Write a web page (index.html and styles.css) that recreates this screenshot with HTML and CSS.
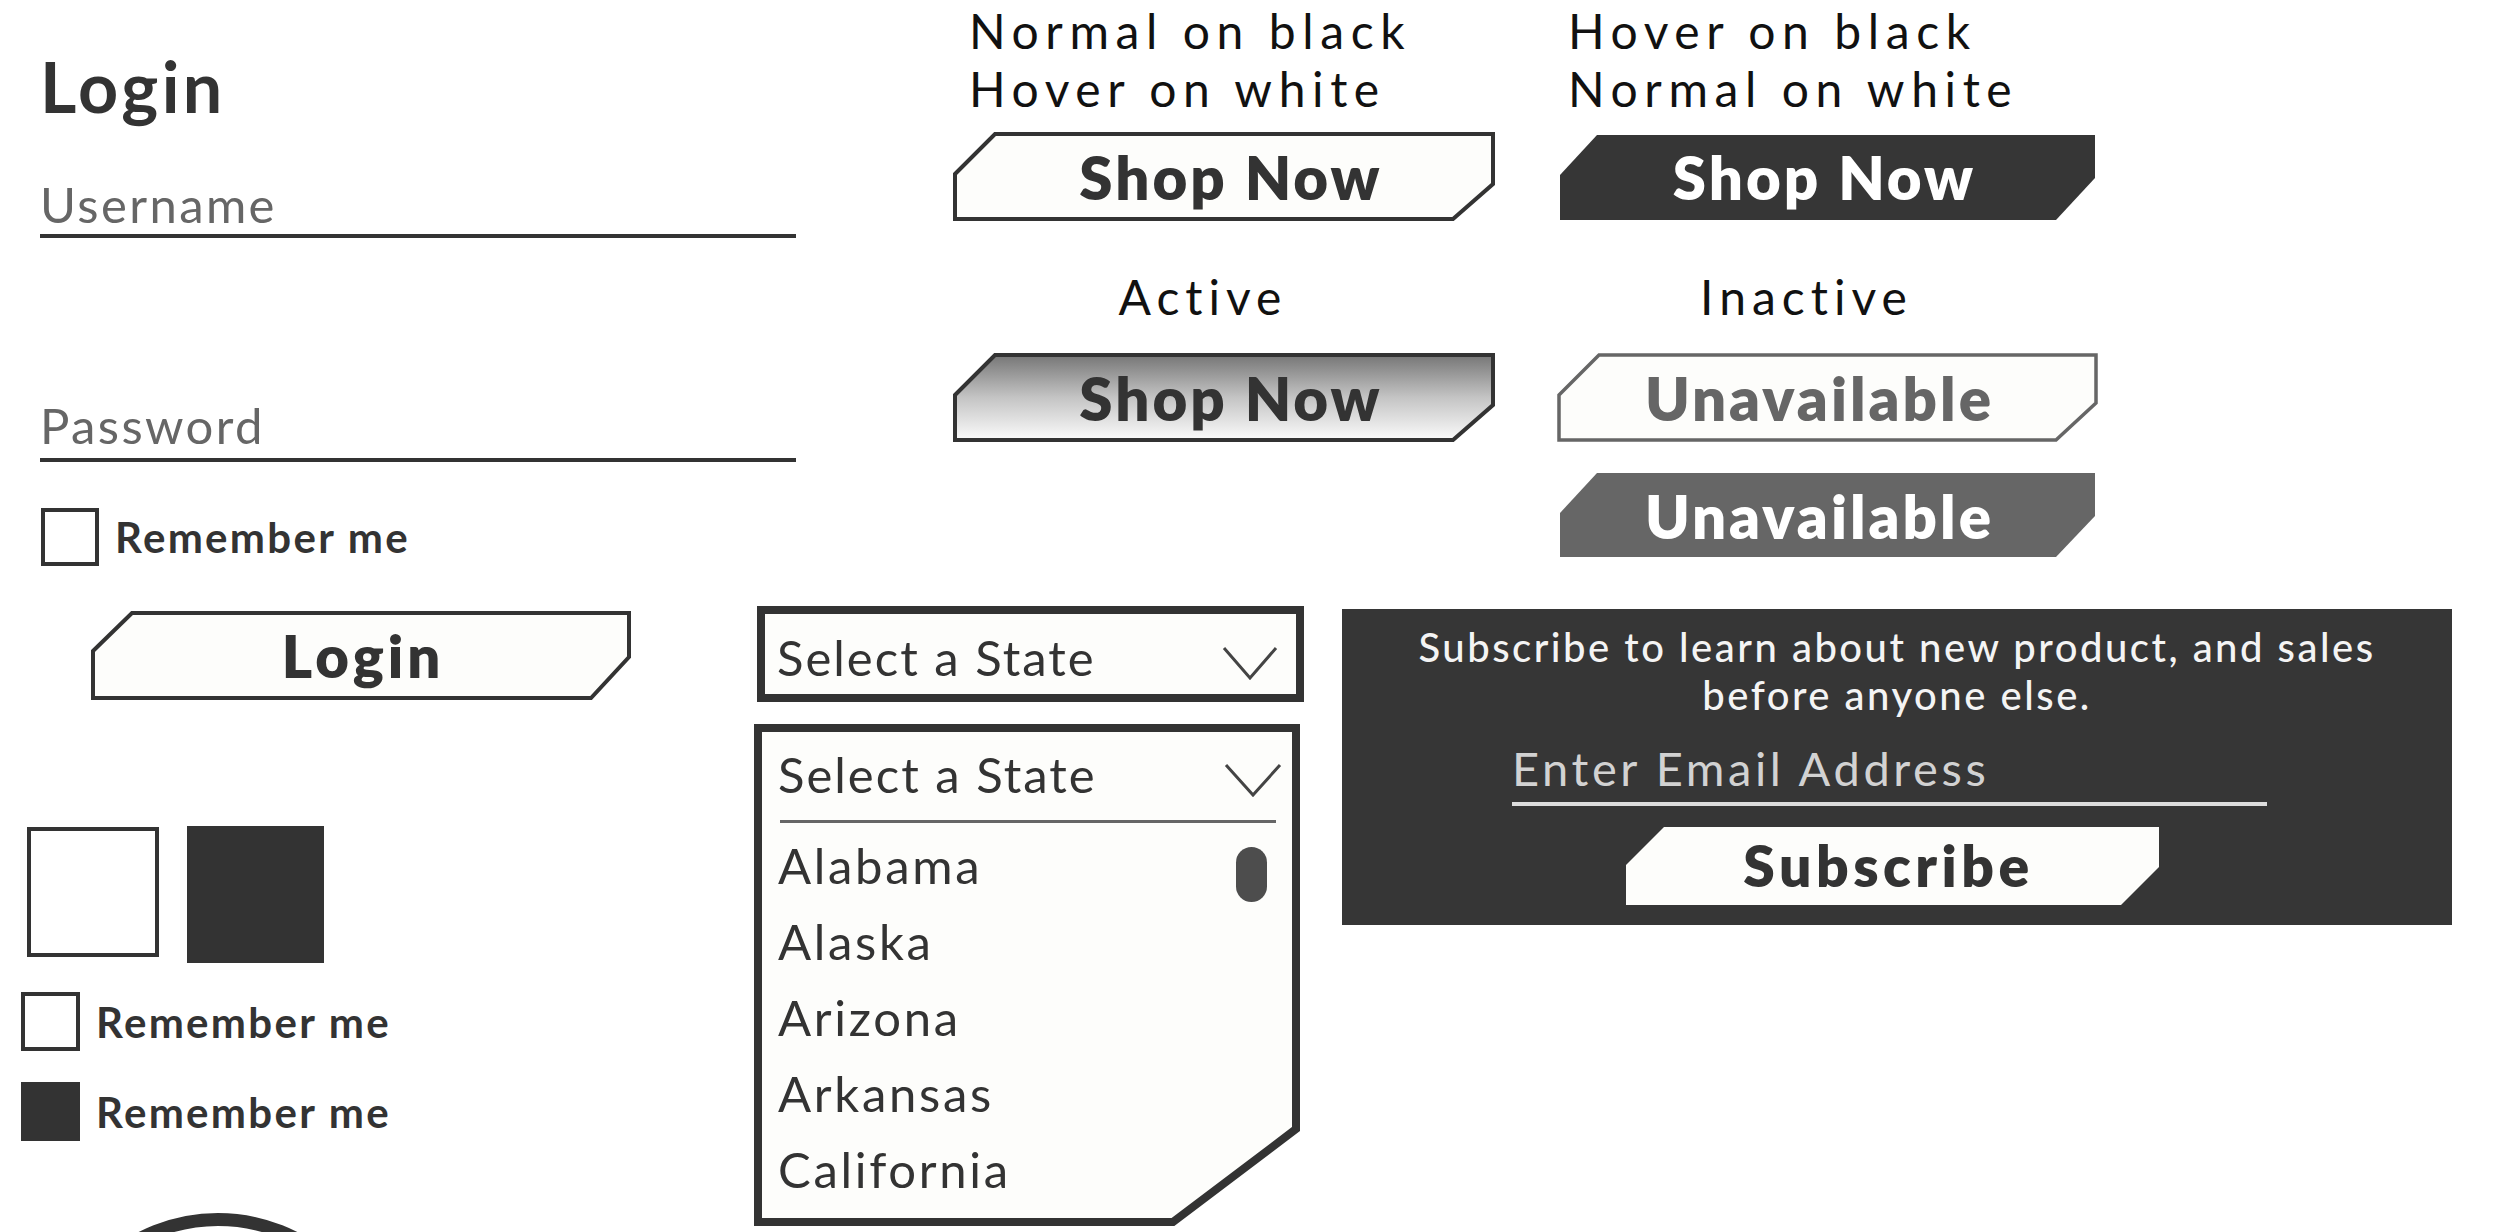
FILE: index.html
```html
<!DOCTYPE html>
<html lang="en">
<head>
<meta charset="utf-8">
<title>UI Kit – Forms and Buttons</title>
<link rel="stylesheet" href="styles.css">
</head>
<body>
<div class="page">
  <section class="login-col">
    <h1 class="title">Login</h1>
    <div class="field field-user"><span class="ph">Username</span></div>
    <div class="field field-pass"><span class="ph">Password</span></div>
    <div class="check check-main"><span class="box"></span><span class="check-label">Remember me</span></div>
    <div class="btn btn-login">
      <svg class="btn-shape" width="540" height="89" viewBox="0 0 540 89"><polygon class="shape-outline" points="2,40 41,2 538,2 538,46 500,87 2,87"/></svg>
      <span class="btn-text">Login</span>
    </div>
    <div class="swatches"><span class="swatch swatch-empty"></span><span class="swatch swatch-full"></span></div>
    <div class="check check-a"><span class="box"></span><span class="check-label">Remember me</span></div>
    <div class="check check-b check-on"><span class="box"></span><span class="check-label">Remember me</span></div>
    <div class="radio"></div>
  </section>

  <section class="main-col">
    <div class="states">
      <div class="state-col state-col-a">
        <p class="state-label label-a">Normal on black<br>Hover on white</p>
        <div class="btn btn-wide btn-row1">
          <svg class="btn-shape" width="542" height="89" viewBox="0 0 542 89"><polygon class="shape-outline" points="2,42 42,2 540,2 540,52 500,87 2,87"/></svg>
          <span class="btn-text text-shop">Shop Now</span>
        </div>
        <p class="state-label state-center">Active</p>
        <div class="btn btn-wide btn-row2">
          <svg class="btn-shape" width="542" height="89" viewBox="0 0 542 89">
            <defs>
              <linearGradient id="activeFill" x1="0" y1="0" x2="0" y2="1">
                <stop offset="0" stop-color="#767676"/>
                <stop offset="0.5" stop-color="#c4c4c4"/>
                <stop offset="1" stop-color="#fbfbfb"/>
              </linearGradient>
            </defs>
            <polygon class="shape-active" points="2,42 42,2 540,2 540,52 500,87 2,87"/>
          </svg>
          <span class="btn-text text-shop">Shop Now</span>
        </div>
      </div>

      <div class="state-col state-col-b">
        <p class="state-label label-b">Hover on black<br>Normal on white</p>
        <div class="btn btn-wide btn-row1">
          <svg class="btn-shape" width="541" height="89" viewBox="0 0 541 89"><polygon class="shape-dark" points="3,43 40,3 538,3 538,46 499,88 3,88"/></svg>
          <span class="btn-text btn-text-light text-shop-b">Shop Now</span>
        </div>
        <p class="state-label state-center">Inactive</p>
        <div class="btn btn-wide btn-row2">
          <svg class="btn-shape" width="541" height="89" viewBox="0 0 541 89"><polygon class="shape-muted" points="2,42 42,2 539,2 539,50 499,87 2,87"/></svg>
          <span class="btn-text btn-text-muted text-unavail">Unavailable</span>
        </div>
        <div class="btn btn-wide btn-row3">
          <svg class="btn-shape" width="541" height="89" viewBox="0 0 541 89"><polygon class="shape-grey" points="3,42 40,2 538,2 538,45 499,86 3,86"/></svg>
          <span class="btn-text btn-text-light text-unavail">Unavailable</span>
        </div>
      </div>
    </div>

    <div class="lower">
      <div class="selects">
        <div class="select">
          <span class="select-text">Select a State</span>
          <svg class="chevron" width="56" height="35" viewBox="0 0 56 35"><polyline points="2,2 28,32 54,2"/></svg>
        </div>
        <div class="dropdown">
          <svg class="dropdown-frame" width="546" height="502" viewBox="0 0 546 502"><polygon points="4,4 542,4 542,405 419,498 4,498"/></svg>
          <div class="dropdown-head">
            <span class="select-text">Select a State</span>
            <svg class="chevron chevron-open" width="58" height="35" viewBox="0 0 58 35"><polyline points="2,2 29,32 56,2"/></svg>
          </div>
          <div class="dropdown-rule"></div>
          <ul class="options">
            <li>Alabama</li>
            <li>Alaska</li>
            <li>Arizona</li>
            <li>Arkansas</li>
            <li>California</li>
          </ul>
          <span class="thumb"></span>
        </div>
      </div>

      <div class="subscribe">
        <p class="sub-text">Subscribe to learn about new product, and sales<br>before anyone else.</p>
        <div class="email"><span class="email-ph">Enter Email Address</span></div>
        <div class="btn btn-sub">
          <svg class="btn-shape" width="533" height="78" viewBox="0 0 533 78"><polygon class="shape-white" points="0,38 38,0 533,0 533,40 495,78 0,78"/></svg>
          <span class="btn-text">Subscribe</span>
        </div>
      </div>
    </div>
  </section>
</div>
</body>
</html>
```

FILE: styles.css
```css
* {
  box-sizing: border-box;
  margin: 0;
  padding: 0;
}

html,
body {
  background: #ffffff;
}

body {
  font-family: "Lato", "Open Sans", sans-serif;
  color: #333333;
}

.page {
  width: 2500px;
  height: 1232px;
  overflow: hidden;
  display: flex;
  align-items: flex-start;
}

/* ---------- Left column: login form ---------- */

.login-col {
  width: 757px;
  flex: none;
  display: flex;
  flex-direction: column;
  align-items: flex-start;
}

.title {
  margin: 51px 0 0 40px;
  font-size: 70px;
  line-height: 70px;
  font-weight: 700;
  letter-spacing: 3.4px;
  color: #333333;
}

.field {
  width: 756px;
  margin-left: 40px;
  border-bottom: 4px solid #333333;
}

.field-user {
  margin-top: 59px;
  padding-bottom: 5px;
}

.field-pass {
  margin-top: 163px;
  padding-bottom: 8px;
}

.ph {
  display: block;
  font-size: 49px;
  line-height: 49px;
  letter-spacing: 2.4px;
  color: #666666;
}

.check {
  display: flex;
  align-items: center;
}

.box {
  flex: none;
  width: 58px;
  height: 58px;
  border: 4px solid #333333;
}

.check-label {
  margin-left: 16px;
  font-size: 42px;
  line-height: 42px;
  font-weight: 700;
  letter-spacing: 2.3px;
  color: #333333;
}

.check-main {
  margin: 46px 0 0 41px;
}

.check-a {
  margin: 29px 0 0 21px;
}

.check-b {
  margin: 31px 0 0 21px;
}

.check-a .box,
.check-b .box {
  width: 59px;
  height: 59px;
}

.check-on .box {
  background: #333333;
}

.swatches {
  display: flex;
  align-items: flex-start;
  gap: 28px;
  margin: 126px 0 0 27px;
}

.swatch {
  flex: none;
}

.swatch-empty {
  width: 132px;
  height: 130px;
  margin-top: 1px;
  border: 4px solid #333333;
}

.swatch-full {
  width: 137px;
  height: 137px;
  background: #333333;
}

.radio {
  flex: none;
  width: 350px;
  height: 350px;
  margin: 72px 0 0 43px;
  border: 13px solid #333333;
  border-radius: 50%;
}

/* ---------- Buttons ---------- */

.btn {
  position: relative;
  flex: none;
  display: flex;
  align-items: center;
  justify-content: center;
}

.btn-shape {
  position: absolute;
  left: 0;
  top: 0;
}

.btn-text {
  position: relative;
  font-weight: 800;
  color: #333333;
}

.btn-login {
  width: 540px;
  height: 89px;
  margin: 45px 0 0 91px;
}

.btn-login .btn-text {
  font-size: 58px;
  line-height: 58px;
  letter-spacing: 4px;
  padding-left: 4px;
}

.shape-outline {
  fill: #fdfdfb;
  stroke: #333333;
  stroke-width: 4;
}

.shape-active {
  fill: url(#activeFill);
  stroke: #333333;
  stroke-width: 4;
}

.shape-dark {
  fill: #363636;
}

.shape-muted {
  fill: #fdfdfb;
  stroke: #666666;
  stroke-width: 3.5;
}

.shape-grey {
  fill: #666666;
}

.shape-white {
  fill: #fdfdfb;
}

/* ---------- Button states grid ---------- */

.main-col {
  flex: none;
  width: 1743px;
  display: flex;
  flex-direction: column;
}

.states {
  display: flex;
  align-items: flex-start;
  gap: 62px;
  padding: 2px 0 0 196px;
}

.state-col {
  display: flex;
  flex-direction: column;
}

.state-col-a {
  width: 542px;
}

.state-col-b {
  width: 541px;
}

.state-label {
  font-size: 48px;
  line-height: 58px;
  letter-spacing: 6.6px;
  color: #111111;
}

.label-a {
  padding-left: 16px;
}

.label-b {
  padding-left: 11px;
}

.state-center {
  margin-top: 47px;
  padding-right: 42px;
  text-align: center;
  letter-spacing: 6px;
}

.btn-wide {
  width: 100%;
  height: 89px;
}

.btn-wide .btn-text {
  font-size: 60px;
  line-height: 60px;
  letter-spacing: 3px;
}

.text-shop {
  padding-left: 14px;
}

.text-shop-b {
  padding-right: 6px;
}

.text-unavail {
  padding-right: 16px;
  letter-spacing: 3.5px;
}

.btn-row1 {
  margin-top: 14px;
}

.btn-row2 {
  margin-top: 27px;
}

.btn-row3 {
  margin-top: 29px;
}

.btn-text-light {
  color: #ffffff;
}

.btn-text-muted {
  color: #666666;
}

/* ---------- Lower area ---------- */

.lower {
  display: flex;
  align-items: flex-start;
  margin-top: 46px;
}

.selects {
  flex: none;
  width: 547px;
  display: flex;
  flex-direction: column;
}

.select {
  height: 96px;
  border: 8px solid #333333;
  display: flex;
  align-items: center;
  justify-content: space-between;
  padding: 7px 18px 0 12px;
  background: #fdfdfb;
}

.select-text {
  font-size: 49px;
  line-height: 49px;
  letter-spacing: 2px;
  color: #333333;
}

.chevron {
  flex: none;
  margin-top: 11px;
}

.chevron polyline {
  fill: none;
  stroke: #444444;
  stroke-width: 3;
}

.dropdown {
  position: relative;
  width: 546px;
  height: 502px;
  margin: 22px 0 0 -3px;
  padding: 8px;
}

.dropdown-frame {
  position: absolute;
  left: 0;
  top: 0;
}

.dropdown-frame polygon {
  fill: #fdfdfb;
  stroke: #333333;
  stroke-width: 8;
}

.dropdown-head {
  position: relative;
  display: flex;
  justify-content: space-between;
  align-items: flex-start;
  padding: 17.5px 10px 0 16px;
}

.chevron-open {
  margin-top: 13.5px;
}

.dropdown-rule {
  position: relative;
  width: 496px;
  height: 3px;
  margin: 21.5px 0 0 18px;
  background: #666666;
}

.options {
  position: relative;
  list-style: none;
  margin: 4px 0 0 16px;
}

.options li {
  font-size: 49px;
  line-height: 76px;
  letter-spacing: 2.7px;
  color: #333333;
}

.thumb {
  position: absolute;
  left: 482px;
  top: 123px;
  width: 31px;
  height: 55px;
  border-radius: 16px;
  background: #4d4d4d;
}

/* ---------- Subscribe box ---------- */

.subscribe {
  flex: none;
  width: 1110px;
  height: 316px;
  margin: 3px 0 0 38px;
  padding-top: 13.5px;
  background: #363636;
  display: flex;
  flex-direction: column;
  align-items: flex-start;
}

.sub-text {
  width: 100%;
  font-size: 40px;
  line-height: 48px;
  font-weight: 500;
  letter-spacing: 2.5px;
  text-align: center;
  color: #f4f4f4;
}

.email {
  width: 755px;
  margin: 26px 0 0 170px;
  padding-bottom: 10px;
  border-bottom: 4px solid #dddddd;
}

.email-ph {
  display: block;
  font-size: 47px;
  line-height: 47px;
  letter-spacing: 3.6px;
  color: #d2d2d2;
}

.btn-sub {
  width: 533px;
  height: 78px;
  margin: 21px 0 0 284px;
}

.btn-sub .btn-text {
  font-size: 57px;
  line-height: 57px;
  letter-spacing: 4.5px;
  padding-right: 8px;
}
```
